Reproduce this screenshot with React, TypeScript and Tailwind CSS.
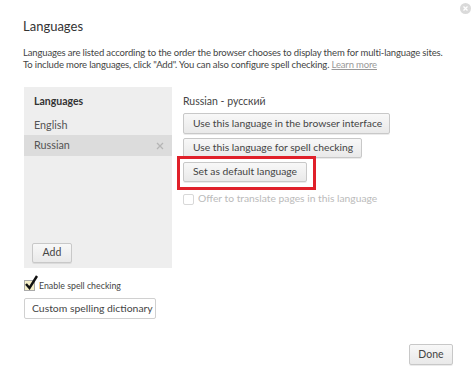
import React from "react";

const font = { fontFamily: 'Lato, "Noto Sans", Arial, sans-serif' };

function Btn({ children, className = "" }: { children: React.ReactNode; className?: string }) {
  return (
    <div
      className={
        "flex items-center whitespace-nowrap border border-[#c8c8c8] rounded-[2px] bg-gradient-to-b from-[#f8f8f8] to-[#e9e9e9] text-[#444] shadow-[0_1px_0_rgba(0,0,0,0.08)] " +
        className
      }
    >
      {children}
    </div>
  );
}

export default function App() {
  return (
    <div className="relative w-[474px] h-[384px] bg-white text-[#333] overflow-hidden" style={font}>
      {/* close icon */}
      <div className="absolute left-[460px] top-[3px] w-[11px] h-[11px] rounded-full bg-[#dadada] flex items-center justify-center">
        <svg width="7" height="7" viewBox="0 0 7 7">
          <path d="M1.5 1.5 L5.5 5.5 M5.5 1.5 L1.5 5.5" stroke="#fff" strokeWidth="1.3" />
        </svg>
      </div>

      <div className="pl-[23px] pt-[19px]">
        <div className="h-[14px] text-[13px] leading-[14px] text-[#333]">Languages</div>
        <div className="mt-[14px] text-[9.5px] leading-[12px] tracking-[-0.15px] text-[#444] whitespace-nowrap">
          <div>Languages are listed according to the order the browser chooses to display them for multi-language sites.</div>
          <div>
            To include more languages, click "Add". You can also configure spell checking.{" "}
            <span className="text-[#999] underline">Learn more</span>
          </div>
        </div>

        <div className="flex mt-[16px]">
          <div className="w-[148px] h-[181px] bg-[#eeeeee] flex flex-col ml-[1px]">
            <div className="h-[28px] pl-[10px] pt-[7px] text-[10.5px] leading-[14px] font-bold text-[#333]">Languages</div>
            <div className="h-[20px] pl-[10px] flex items-center text-[10.8px] text-[#555]">English</div>
            <div className="h-[21px] pl-[10px] pr-[8px] flex items-center justify-between bg-[#dcdcdc] text-[10.8px] text-[#555]">
              <span>Russian</span>
              <svg width="8" height="8" viewBox="0 0 8 8">
                <path d="M1 1 L7 7 M7 1 L1 7" stroke="#b5b5b5" strokeWidth="1.3" />
              </svg>
            </div>
            <div className="flex-1" />
            <Btn className="ml-[8px] mb-[5px] w-[40px] h-[20px] justify-center text-[10.5px]">Add</Btn>
          </div>

          <div className="ml-[11px] flex flex-col">
            <div className="h-[26px] pt-[7px] text-[10.5px] leading-[14px] text-[#444] whitespace-nowrap">Russian - русский</div>
            <Btn className="w-[207px] h-[21px] pl-[9px] text-[10.3px]">Use this language in the browser interface</Btn>
            <Btn className="mt-[4px] w-[179px] h-[20px] pl-[9px] text-[10.3px]">Use this language for spell checking</Btn>
            <div className="mt-[-2px] ml-[-6px] w-[139px] h-[34px] border-[3px] border-[#e0202a] pl-[3px] pt-[3px]">
              <Btn className="w-[124px] h-[20px] pl-[9px] text-[10.3px]">Set as default language</Btn>
            </div>
            <div className="flex items-center mt-[3px] h-[12px]">
              <div className="w-[11px] h-[11px] border border-[#d8d8d8] rounded-[2px] bg-white" />
              <span className="ml-[4px] text-[10.3px] text-[#bbb] whitespace-nowrap">Offer to translate pages in this language</span>
            </div>
          </div>
        </div>

        <div className="flex items-end mt-[12px] h-[11px] ml-[1px]">
          <div className="relative w-[11px] h-[11px] border border-[#aaa] bg-[#f5efc8]">
            <svg className="absolute left-[-1px] top-[-6px]" width="15" height="16" viewBox="0 0 15 16">
              <path d="M2 9 L5.5 13 L13 1" stroke="#111" strokeWidth="2.4" fill="none" />
            </svg>
          </div>
          <span className="ml-[4px] text-[8.8px] leading-[10px] text-[#444] whitespace-nowrap">Enable spell checking</span>
        </div>
        <div className="mt-[7px] ml-[1px] w-[132px] h-[21px] border border-[#d0d0d0] rounded-[2px] bg-white flex items-center pl-[7px] text-[10.4px] text-[#444] whitespace-nowrap">
          Custom spelling dictionary
        </div>
      </div>

      <Btn className="absolute left-[409px] top-[344px] w-[44px] h-[21px] justify-center text-[10.5px]">Done</Btn>
    </div>
  );
}
